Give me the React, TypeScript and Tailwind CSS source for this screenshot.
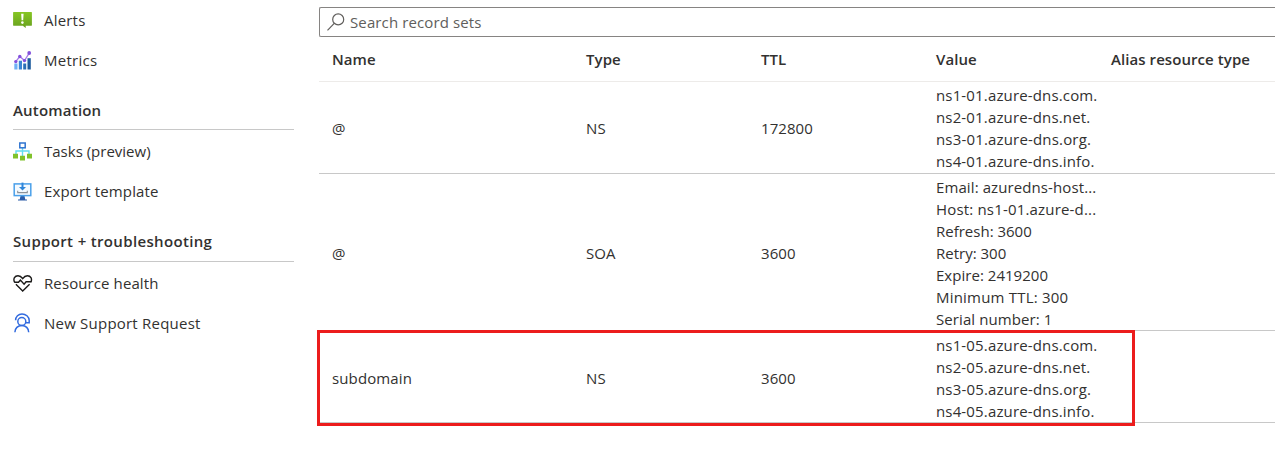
import type { ReactNode } from 'react';

const AlertIcon = () => (
  <svg width="19" height="19" viewBox="0 0 19 19" className="block">
    <defs>
      <linearGradient id="alertFill" x1="0" y1="0" x2="0" y2="1">
        <stop offset="0" stopColor="#86c623" />
        <stop offset="1" stopColor="#68a01f" />
      </linearGradient>
    </defs>
    <path d="M.5 1h18a.4.4 0 0 1 .4.4v12.900a.4.4 0 0 1-.4.4H12.700v2.300L9.800 14.700H.5a.4.4 0 0 1-.4-.4V1.400A.4.4 0 0 1 .5 1Z" fill="url(#alertFill)" />
    <path d="M8.200 2.800h2.400l-.4 6.500H8.600Z" fill="#fff" />
    <circle cx="9.400" cy="11.600" r="1.300" fill="#fff" />
  </svg>
);

const MetricsIcon = () => (
  <svg width="19" height="19" viewBox="0 0 19 19" className="block">
    <path d="M1.300 12.500h3.200v6H1.300Z" fill="#6fb0f5" />
    <path d="M5.800 9.700H9v8.800H5.800Z" fill="#3c86d6" />
    <path d="M10.200 12.500h3v6h-3Z" fill="#2b6fb6" />
    <path d="M14.500 7.200h3.300v11.300h-3.300Z" fill="#1f5c9e" />
    <path d="M2.700 10.600 6.800 5.500l4.700 4 4.900-7.700" fill="none" stroke="#a77bea" strokeWidth="1.300" />
    <g fill="#8250dc">
      <circle cx="2.800" cy="10.600" r="1.700" />
      <circle cx="6.800" cy="5.500" r="1.700" />
      <circle cx="11.500" cy="9.600" r="1.700" />
      <circle cx="16.200" cy="2" r="1.900" />
    </g>
  </svg>
);

const TasksIcon = () => (
  <svg width="19" height="19" viewBox="0 0 19 19" className="block">
    <path d="M9.500 6v8M3 12V9h13v3" fill="none" stroke="#62dcf2" strokeWidth="1.400" />
    <rect x="6.800" y="1" width="5.400" height="4.800" fill="#fff" stroke="#2f74d0" strokeWidth="1.500" />
    <g fill="#80c22b">
      <path d="M0 11.800h5v4.700H0ZM14 11.800h5v4.700h-5ZM7 13.700h5v4.800H7Z" />
    </g>
  </svg>
);

const ExportIcon = () => (
  <svg width="19" height="19" viewBox="0 0 19 19" className="block">
    <path d="M7.500 14h4l.8 3.500h1.700v1H5v-1h1.700Z" fill="#2c5ca8" />
    <rect x="1.200" y="1.900" width="16.600" height="11.700" fill="#f4faff" stroke="#4aa0ea" strokeWidth="1.500" />
    <path d="M9.500.6v5.500" stroke="#2f86da" strokeWidth="2" />
    <path d="M6 5h7L9.500 8.500Z" fill="#2f86da" />
    <path d="M4.700 8.800v1.800h9.600V8.800" fill="none" stroke="#8c9299" strokeWidth="1.100" />
  </svg>
);

const HealthIcon = () => (
  <svg width="20" height="19" viewBox="0 0 20 19" className="block" fill="none" stroke="#1b1a19" strokeWidth="1.400">
    <path d="M1.600 8.300C-.2 4.700 1.800 1.700 5 1.700c2 0 3.600 1.300 4.700 2.900 1.100-1.600 2.700-2.900 4.700-2.900 3.200 0 5.200 3 3.400 6.600" />
    <path d="M1.200 8.300h4.300L7.400 6l3.700 4.200 2-2.400h5.200" />
    <path d="M2.900 10.300 9.700 17l6.900-6.700" />
  </svg>
);

const SupportIcon = () => (
  <svg width="19" height="20" viewBox="0 0 19 20" className="block" fill="none" stroke="#326bdf" strokeWidth="1.500">
    <path d="M2.600 7.300C2.600 3.500 5.400.9 9 .9s7.200 2.800 7.200 6.600v2.200h-4" />
    <circle cx="8.800" cy="8.500" r="4" />
    <path d="M1.900 19.300c0-4 2.900-6.800 6.900-6.800s6.900 2.800 6.900 6.800" />
  </svg>
);

const SearchIcon = () => (
  <svg width="18" height="18" viewBox="0 0 18 18" className="-mt-px block" fill="none" stroke="#605e5c" strokeWidth="1.200">
    <circle cx="11.200" cy="6.400" r="5.500" />
    <path d="M7.200 10.400.5 17.300" />
  </svg>
);

const NavItem = ({ icon, children, track }: { icon: ReactNode; children: string; track: string }) => (
  <a className="flex h-10 items-center">
    <span className="w-[31px] shrink-0">{icon}</span>
    <span className={track}>{children}</span>
  </a>
);

const COLS = 'grid grid-cols-[254px_175px_175px_175px_1fr] items-center pl-[13px]';

type RecordSet = { name: string; type: string; ttl: string; values: [string, string][]; box: string };

const records: RecordSet[] = [
  {
    name: '@', type: 'NS', ttl: '172800', box: 'h-[92px]',
    values: [
      ['ns1-01.azure-dns.com.', 'tracking-[0.15px]'],
      ['ns2-01.azure-dns.net.', 'tracking-[0.15px]'],
      ['ns3-01.azure-dns.org.', 'tracking-[0.17px]'],
      ['ns4-01.azure-dns.info.', 'tracking-[0.15px]'],
    ],
  },
  {
    name: '@', type: 'SOA', ttl: '3600', box: 'h-[157px] pt-[2px]',
    values: [
      ['Email: azuredns-host...', 'tracking-[0.1px]'],
      ['Host: ns1-01.azure-d...', 'tracking-[0.18px]'],
      ['Refresh: 3600', ''],
      ['Retry: 300', ''],
      ['Expire: 2419200', 'tracking-[0.03px]'],
      ['Minimum TTL: 300', 'tracking-[0.2px]'],
      ['Serial number: 1', 'tracking-[0.08px]'],
    ],
  },
  {
    name: 'subdomain', type: 'NS', ttl: '3600', box: 'h-[92px] pt-[2px]',
    values: [
      ['ns1-05.azure-dns.com.', 'tracking-[0.15px]'],
      ['ns2-05.azure-dns.net.', 'tracking-[0.15px]'],
      ['ns3-05.azure-dns.org.', 'tracking-[0.17px]'],
      ['ns4-05.azure-dns.info.', 'tracking-[0.15px]'],
    ],
  },
];

export default function App() {
  return (
    <div className="relative flex h-[459px] w-[1275px] overflow-hidden bg-white font-['Open_Sans','Noto_Sans',sans-serif] text-[15px] leading-[22px] whitespace-nowrap text-[#323130]">
      <aside className="w-[319px] shrink-0 pr-[25px] pl-[13px]">
        <NavItem icon={<AlertIcon />} track="tracking-[0.2px]">Alerts</NavItem>
        <NavItem icon={<MetricsIcon />} track="tracking-[0.28px]">Metrics</NavItem>
        <h2 className="mt-[11px] flex h-[39px] items-center border-b border-[#c8c8c8] font-semibold tracking-[0.2px]">Automation</h2>
        <div className="mt-px">
          <NavItem icon={<TasksIcon />} track="">Tasks (preview)</NavItem>
          <NavItem icon={<ExportIcon />} track="tracking-[0.14px]">Export template</NavItem>
        </div>
        <h2 className="mt-[11px] flex h-[40px] items-center border-b border-[#c8c8c8] pb-[2px] font-semibold tracking-[0.34px]">Support + troubleshooting</h2>
        <div className="mt-px">
          <NavItem icon={<HealthIcon />} track="tracking-[0.1px]">Resource health</NavItem>
          <NavItem icon={<SupportIcon />} track="tracking-[0.22px]">New Support Request</NavItem>
        </div>
      </aside>
      <main className="flex-1 pt-[7px]">
        <div className="flex h-[30px] items-center rounded-l-[2px] border border-r-0 border-[#868482] pl-[7px] text-[#605e5c]">
          <SearchIcon />
          <span className="ml-[5px] tracking-[0.12px]">Search record sets</span>
        </div>
        <div className={`${COLS} h-[45px] border-b border-[#edebe9] font-semibold tracking-[0.07px]`}>
          <span>Name</span>
          <span>Type</span>
          <span>TTL</span>
          <span>Value</span>
          <span>Alias resource type</span>
        </div>
        {records.map((r, i) => (
          <div key={i} className={`${COLS} ${r.box} border-b border-[#c8c8c8]`}>
            <span className="tracking-[0.12px]">{r.name}</span>
            <span className="tracking-[0.1px]">{r.type}</span>
            <span className="tracking-[0.06px]">{r.ttl}</span>
            <div className="flex flex-col">
              {r.values.map(([v, track]) => (
                <span key={v} className={track}>{v}</span>
              ))}
            </div>
          </div>
        ))}
      </main>
      <div className="pointer-events-none absolute top-[330px] left-[317px] h-[96px] w-[818px] border-3 border-[#ec1c1c]" />
    </div>
  );
}
